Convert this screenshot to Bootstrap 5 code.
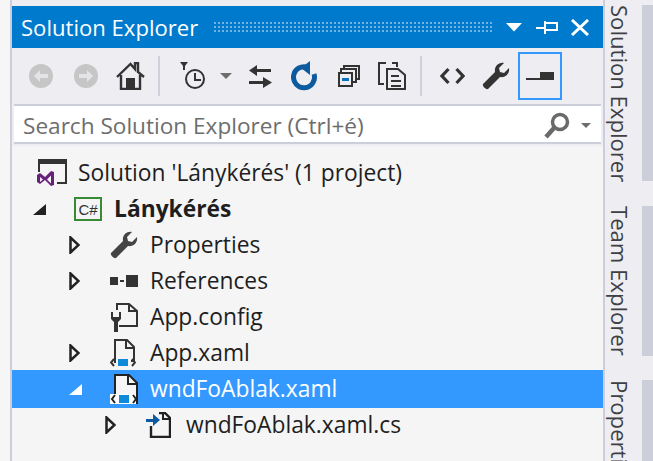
<!DOCTYPE html>
<html lang="hu">
<head>
<meta charset="utf-8">
<title>Solution Explorer</title>
<link href="https://cdn.jsdelivr.net/npm/bootstrap@5.3.0/dist/css/bootstrap.min.css" rel="stylesheet">
<style>
html,body{height:461px;overflow:hidden}
body{background:#eeeef2;font-family:"Open Sans","Noto Sans",sans-serif;font-size:22.6px;color:#1e1e1e}
svg{display:block;flex:none}
.shell{height:461px;width:653px}
.left-gutter{width:12px;background:#f6f6f6;border-right:2px solid #cccedb}
.se-panel{width:591px;padding-top:6px}
.se-title{height:42px;background:#007acc;color:#fff;padding:0 12px 0 9px}
.se-title-text{font-size:22.1px;line-height:42px;white-space:nowrap;width:192px}
.se-grip{height:12px;width:280px;background-image:radial-gradient(circle,#6fb4e3 0.9px,transparent 1.1px);background-size:4px 4px}
.se-tools{height:56px;padding-left:16px;background:#eeeef2}
.ml-8{margin-left:8px}.ml-11{margin-left:11px}.ml-13{margin-left:13px}.ml-14{margin-left:14px}.ml-16{margin-left:16px}.ml-17{margin-left:17px}.ml-18{margin-left:18px}.ml-19{margin-left:19px}.ml-20{margin-left:20px}
.tool-sep{width:2px;height:40px;background:#cfd0d9}
.tool-box{width:44px;height:48px;border:2px solid #3399ff}
.se-search{height:40px;background:#fff;margin:0 2px;border-top:2px solid #cccedb;border-bottom:2px solid #cccedb;padding:3px 10px 0 9px;color:#6d6d6d}
.se-search-text{white-space:nowrap}
.se-tree{background:#f5f5f5;flex:1;padding-top:9px;margin-top:2px;font-size:22.8px}
.tree-row{height:36px;white-space:nowrap;line-height:36px}
.tree-row.sel{background:#3399ff;color:#fff;height:38px;margin:-1px 0}
.ind0{padding-left:25px}.ind1{padding-left:21px}.ind2{padding-left:57px}.ind3{padding-left:93px}
.arrow-slot{width:41px}
.icon-slot{width:40px}
.icon-root{width:41px}
.tree-bold{font-weight:700}
.se-rail{width:50px;border-left:2px solid #cccedb;height:461px;padding-top:5px;overflow:hidden}
.rail-tab{width:48px;flex:none}
.rail-text{writing-mode:vertical-rl;color:#3f3f46;line-height:27px;white-space:nowrap;width:27px;margin-left:1px;flex:none;font-size:22.1px}
.rail-bar{width:11px;margin-left:auto;flex:none;background:#ccced9}
.rail-a{height:176px;margin-bottom:25px}.rail-b{height:150px;margin-bottom:24px}.rail-c{height:81px;overflow:hidden}
</style>
</head>
<body>
<div class="shell d-flex">
  <div class="left-gutter flex-shrink-0"></div>
  <div class="se-panel d-flex flex-column flex-shrink-0">
    <div class="se-title d-flex align-items-center flex-shrink-0">
      <span class="se-title-text">Solution Explorer</span>
      <div class="se-grip"></div>
      <svg width="16" height="9" viewBox="0 0 16 9" class="ml-13"><path d="M0 0h16L8 8.500z" fill="#fff"/></svg>
      <svg width="22" height="13" viewBox="0 0 22 13" class="ml-14"><path d="M0 6h8V0h2v1h12v9H10v3H8V8H0zM10 3v5h10V3z" fill="#fff" fill-rule="evenodd"/></svg>
      <svg width="18" height="17" viewBox="0 0 18 17" class="ml-13"><path d="M1 1l16 15M17 1L1 16" stroke="#fff" stroke-width="3"/></svg>
    </div>
    <div class="se-tools d-flex align-items-center flex-shrink-0">
      <svg width="26" height="26" viewBox="0 0 26 26"><circle cx="13" cy="13" r="12" fill="#c6c6c6"/><path d="M6 13l6-6v4h8v4h-8v4z" fill="#e4e4e6"/></svg>
      <svg width="26" height="26" viewBox="0 0 26 26" class="ml-19"><circle cx="13" cy="13" r="12" fill="#c6c6c6"/><path d="M20 13l-6-6v4H6v4h8v4z" fill="#e4e4e6"/></svg>
      <svg width="29" height="28" viewBox="0 0 29 28" class="ml-17"><path d="M1 15L14.500 2 19 7V1h3v9l6 5M5 13v14h19V13" fill="none" stroke="#333" stroke-width="2.400"/><path d="M10 16h9v11h-9z" fill="#333"/></svg>
      <div class="tool-sep ml-13"></div>
      <svg width="26" height="28" viewBox="0 0 26 28" class="ml-20"><path d="M0 0h8L5 4v4H3V4z" fill="#333"/><circle cx="15" cy="17" r="9" fill="none" stroke="#333" stroke-width="2"/><path d="M15 11v7h6" fill="none" stroke="#333" stroke-width="2"/></svg>
      <svg width="12" height="6" viewBox="0 0 12 6" class="ml-14"><path d="M0 0h12L6 6z" fill="#6d6d6d"/></svg>
      <svg width="25" height="25" viewBox="0 0 25 25" class="ml-16"><path d="M9 1L1 6.500 9 12V8h14V5H9zM15 13v4H1v3h14v4l9-5.500z" fill="#333"/></svg>
      <svg width="27" height="30" viewBox="0 0 27 30" class="ml-18"><path d="M17 6.500A10.500 10.500 0 1 0 23 13" fill="none" stroke="#0e5a9e" stroke-width="5"/><path d="M10 7l9-7v14z" fill="#0e5a9e"/></svg>
      <svg width="22" height="22" viewBox="0 0 22 22" class="ml-20"><path d="M6 5V1h15v13h-4M3 8V4h15v13h-4" fill="none" stroke="#333" stroke-width="2"/><path d="M1 8h13v13H1z" fill="#eeeef2" stroke="#333" stroke-width="2"/><path d="M4 13h7v3H4z" fill="#0e70c0"/></svg>
      <svg width="28" height="28" viewBox="0 0 28 28" class="ml-18"><path d="M8 1H1v21h5M19 5V1h-5" fill="none" stroke="#333" stroke-width="2"/><path d="M9 7h11l7 6v14H9z" fill="#eeeef2" stroke="#333" stroke-width="2"/><path d="M13 13h8v2h-8zM13 18h10v2H13zM13 23h10v2H13z" fill="#333"/></svg>
      <div class="tool-sep ml-14"></div>
      <svg width="25" height="18" viewBox="0 0 25 18" class="ml-18"><path d="M8.500 2L2 9l6.500 7M16.500 2L23 9l-6.500 7" fill="none" stroke="#333" stroke-width="3.200"/></svg>
      <svg width="28" height="28" viewBox="0 0 28 28" class="ml-17"><path d="M27 6l-5 5-4-1-1-4 5-5c-5-1-10 3-9 9L1 22c-1 2 3 6 5 5l12-12c5 1 10-3 9-9z" fill="#333"/></svg>
      <div class="tool-box d-flex align-items-center justify-content-center ml-8"><svg width="28" height="9" viewBox="0 0 28 9"><path d="M0 6h14V0h14v8H0z" fill="#333"/></svg></div>
    </div>
    <div class="se-search d-flex align-items-center flex-shrink-0">
      <span class="se-search-text flex-grow-1">Search Solution Explorer (Ctrl+é)</span>
      <svg width="26" height="27" viewBox="0 0 26 27"><circle cx="16" cy="10" r="7.500" fill="none" stroke="#6a6a6a" stroke-width="3.500"/><path d="M10 16L2 25" stroke="#6a6a6a" stroke-width="4.500"/></svg>
      <svg width="10" height="5" viewBox="0 0 10 5" class="ml-11"><path d="M0 0h10L5 5z" fill="#6d6d6d"/></svg>
    </div>
    <div class="se-tree">
      <div class="tree-row ind0 d-flex align-items-center">
        <div class="icon-root"><svg width="30" height="28" viewBox="0 0 30 28"><path d="M2 13V1h27v23h-9" fill="none" stroke="#333" stroke-width="2"/><path d="M2 1h27v4H2z" fill="#333"/><path d="M0 16l3-2 5 4 6-6 3 1v13l-3 1-6-6-5 4-3-2zM3 18v5l3-2.500zM10 20.500l4 4v-8z" fill="#68217a" fill-rule="evenodd"/></svg></div>
        <span>Solution 'Lánykérés' (1 project)</span>
      </div>
      <div class="tree-row ind1 d-flex align-items-center">
        <div class="arrow-slot"><svg width="13" height="11" viewBox="0 0 13 11"><path d="M13 0v11H0z" fill="#222"/></svg></div>
        <div class="icon-slot"><svg width="28" height="24" viewBox="0 0 28 24"><rect x="1" y="1" width="26" height="22" fill="#f5f5f5" stroke="#388a34" stroke-width="2"/><text x="14" y="18" text-anchor="middle" font-family="Liberation Sans" font-size="15" fill="#333">C#</text></svg></div>
        <span class="tree-bold">Lánykérés</span>
      </div>
      <div class="tree-row ind2 d-flex align-items-center">
        <div class="arrow-slot"><svg width="11" height="18" viewBox="0 0 11 18"><path d="M1.500 1.500v15L9.500 9z" fill="none" stroke="#222" stroke-width="2.500"/></svg></div>
        <div class="icon-slot"><svg width="28" height="28" viewBox="0 0 28 28"><path d="M27 6l-5 5-4-1-1-4 5-5c-5-1-10 3-9 9L1 22c-1 2 3 6 5 5l12-12c5 1 10-3 9-9z" fill="#444"/></svg></div>
        <span>Properties</span>
      </div>
      <div class="tree-row ind2 d-flex align-items-center">
        <div class="arrow-slot"><svg width="11" height="18" viewBox="0 0 11 18"><path d="M1.500 1.500v15L9.500 9z" fill="none" stroke="#222" stroke-width="2.500"/></svg></div>
        <div class="icon-slot"><svg width="28" height="14" viewBox="0 0 28 14"><path d="M0 3h8v8H0zM16 1h12v12H16zM10 6h4v2h-4z" fill="#333"/></svg></div>
        <span>References</span>
      </div>
      <div class="tree-row ind2 d-flex align-items-center">
        <div class="arrow-slot"></div>
        <div class="icon-slot"><svg width="28" height="30" viewBox="0 0 28 30"><path d="M7 8V2h12l8 7v15H9" fill="none" stroke="#333" stroke-width="2"/><path d="M19 2v7h8" fill="none" stroke="#333" stroke-width="2"/><path d="M1 10v7l3 3v10h4V20l3-3v-7H9v5H3v-5z" fill="#333"/></svg></div>
        <span>App.config</span>
      </div>
      <div class="tree-row ind2 d-flex align-items-center">
        <div class="arrow-slot"><svg width="11" height="18" viewBox="0 0 11 18"><path d="M1.500 1.500v15L9.500 9z" fill="none" stroke="#222" stroke-width="2.500"/></svg></div>
        <div class="icon-slot"><svg width="26" height="28" viewBox="0 0 26 28"><path d="M5 20V1h12l7 7v14h-3M5 24v-4" fill="none" stroke="#333" stroke-width="2"/><path d="M16 1v8h8" fill="none" stroke="#333" stroke-width="2"/><path d="M8 20h10v7H8z" fill="#0e8ad8"/><path d="M4 20l-3 3.500L4 27M22 20l3 3.500-3 3.500" fill="none" stroke="#333" stroke-width="2"/></svg></div>
        <span>App.xaml</span>
      </div>
      <div class="tree-row sel ind2 d-flex align-items-center">
        <div class="arrow-slot"><svg width="13" height="11" viewBox="0 0 13 11"><path d="M13 0v11H0z" fill="#fff"/></svg></div>
        <div class="icon-slot"><svg width="28" height="30" viewBox="0 0 28 30"><path d="M5 22V1h14l8 8v20H3" fill="#f5f5f5" stroke="#222" stroke-width="2"/><path d="M18 1v9h9" fill="none" stroke="#222" stroke-width="2"/><path d="M0 20h26v10H0z" fill="#fff"/><path d="M9 21h10v8H9z" fill="#0e8ad8"/><path d="M5 21l-3 4 3 4M23 21l3 4-3 4" fill="none" stroke="#222" stroke-width="2"/></svg></div>
        <span>wndFoAblak.xaml</span>
      </div>
      <div class="tree-row ind3 d-flex align-items-center">
        <div class="arrow-slot"><svg width="11" height="18" viewBox="0 0 11 18"><path d="M1.500 1.500v15L9.500 9z" fill="none" stroke="#222" stroke-width="2.500"/></svg></div>
        <div class="icon-slot"><svg width="25" height="26" viewBox="0 0 25 26"><path d="M5 14v11h19V6l-5-5h-6" fill="#f5f5f5" stroke="#222" stroke-width="2.400"/><path d="M17 1v6h7" fill="none" stroke="#222" stroke-width="2"/><path d="M0 7h7V2l7 6-7 6V10H0z" fill="#0e5a9e"/></svg></div>
        <span>wndFoAblak.xaml.cs</span>
      </div>
    </div>
  </div>
  <div class="se-rail d-flex flex-column flex-shrink-0">
    <div class="rail-tab rail-a d-flex"><div class="rail-text">Solution Explorer</div><div class="rail-bar"></div></div>
    <div class="rail-tab rail-b d-flex"><div class="rail-text">Team Explorer</div><div class="rail-bar"></div></div>
    <div class="rail-tab rail-c d-flex"><div class="rail-text">Properties</div><div class="rail-bar"></div></div>
  </div>
</div>
</body>
</html>
